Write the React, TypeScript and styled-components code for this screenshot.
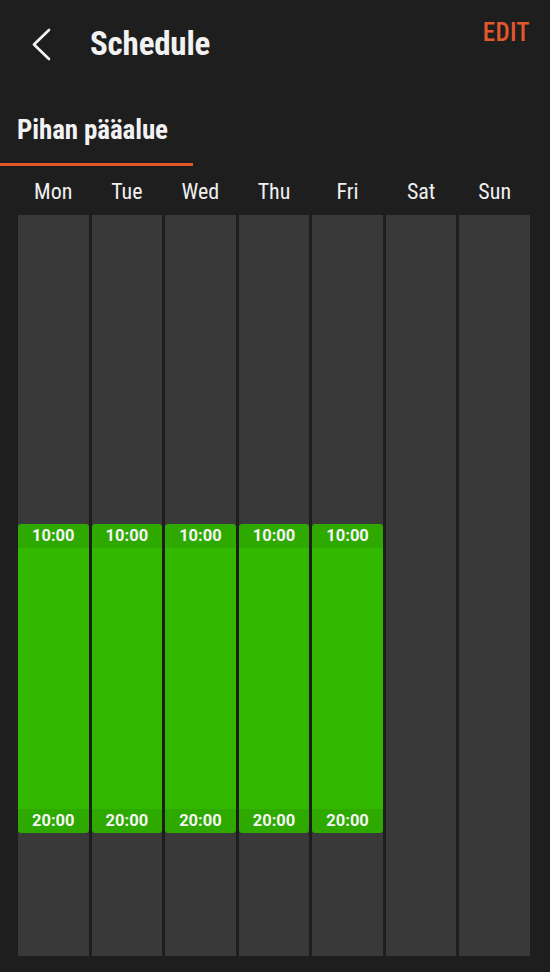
import styled, { createGlobalStyle } from "styled-components";

const GlobalStyle = createGlobalStyle`
  html, body {
    margin: 0;
    padding: 0;
    background-color: #1f1e1f;
  }
  * {
    box-sizing: border-box;
  }
`

const Page = styled.div`
  width: 550px;
  height: 972px;
  display: flex;
  flex-direction: column;
  background-color: #1f1e1f;
  font-family: "Roboto Condensed", Roboto, "Liberation Sans", sans-serif;
  font-stretch: condensed;
  color: #f2f2f2;
`

const Header = styled.div`
  height: 90px;
  display: flex;
  align-items: flex-start;
  padding: 0 20px 0 31px;
`

const BackBtn = styled.div`
  width: 22px;
  height: 88px;
  display: flex;
  align-items: center;
  cursor: pointer;
`

const Title = styled.h1`
  margin: 0 0 0 37px;
  height: 88px;
  line-height: 88px;
  font-size: 33px;
  font-weight: 700;
  letter-spacing: -0.2px;
`

const EditBtn = styled.div`
  margin-left: auto;
  padding-top: 18px;
  font-size: 25px;
  font-weight: 500;
  letter-spacing: 0.3px;
  color: #e3582b;
  cursor: pointer;
`

const TabBar = styled.div`
  height: 76px;
  display: flex;
`

const Tab = styled.div<{ $active?: boolean }>`
  width: 193px;
  display: flex;
  align-items: center;
  padding: 6px 0 0 17px;
  font-size: 27px;
  font-weight: 700;
  letter-spacing: -0.1px;
  border-bottom: 3px solid ${p => p.$active ? '#e3582b' : 'transparent'};
`

const Week = styled.div`
  flex: 1;
  display: grid;
  grid-template-columns: repeat(7, 1fr);
  grid-template-rows: 49px 1fr;
  column-gap: 3px;
  padding: 0 20px 16px 18px;
`

const DayLabel = styled.div`
  display: flex;
  align-items: center;
  justify-content: center;
  padding-top: 2px;
  font-size: 22px;
  font-weight: 400;
  color: #f0f0f0;
`

const DayColumn = styled.div`
  position: relative;
  background-color: #3a393a;
`

const Slot = styled.div`
  position: absolute;
  left: 0;
  right: 0;
  display: flex;
  flex-direction: column;
  justify-content: space-between;
  background-color: #33b800;
  border-radius: 4px;
  overflow: hidden;
`

const SlotTime = styled.div`
  height: 24px;
  display: flex;
  align-items: center;
  justify-content: center;
  background-color: #2ea900;
  font-family: Roboto, "Liberation Sans", sans-serif;
  font-stretch: normal;
  font-size: 16.5px;
  font-weight: 700;
  color: #f4f4f4;
`

interface IDay {
  name: string;
  slot?: { from: number; to: number };
}

const days: IDay[] = [
  { name: 'Mon', slot: { from: 10, to: 20 } },
  { name: 'Tue', slot: { from: 10, to: 20 } },
  { name: 'Wed', slot: { from: 10, to: 20 } },
  { name: 'Thu', slot: { from: 10, to: 20 } },
  { name: 'Fri', slot: { from: 10, to: 20 } },
  { name: 'Sat' },
  { name: 'Sun' },
]

const fmt = (h: number) => `${h < 10 ? '0' : ''}${h}:00`

export default function App() {
  return (
    <Page>
      <GlobalStyle />
      <Header>
        <BackBtn>
          <svg width="21" height="33" viewBox="0 0 21 33" fill="none">
            <path d="M18 2 L3 16.5 L18 31" stroke="#f2f2f2" strokeWidth="2.7" strokeLinecap="round" strokeLinejoin="round" />
          </svg>
        </BackBtn>
        <Title>Schedule</Title>
        <EditBtn>EDIT</EditBtn>
      </Header>
      <TabBar>
        <Tab $active>Pihan pääalue</Tab>
      </TabBar>
      <Week>
        {days.map(d => <DayLabel key={d.name}>{d.name}</DayLabel>)}
        {days.map(d => (
          <DayColumn key={d.name}>
            {d.slot && (
              <Slot style={{ top: `${d.slot.from / 24 * 100}%`, height: `${(d.slot.to - d.slot.from) / 24 * 100}%` }}>
                <SlotTime>{fmt(d.slot.from)}</SlotTime>
                <SlotTime>{fmt(d.slot.to)}</SlotTime>
              </Slot>
            )}
          </DayColumn>
        ))}
      </Week>
    </Page>
  )
}
